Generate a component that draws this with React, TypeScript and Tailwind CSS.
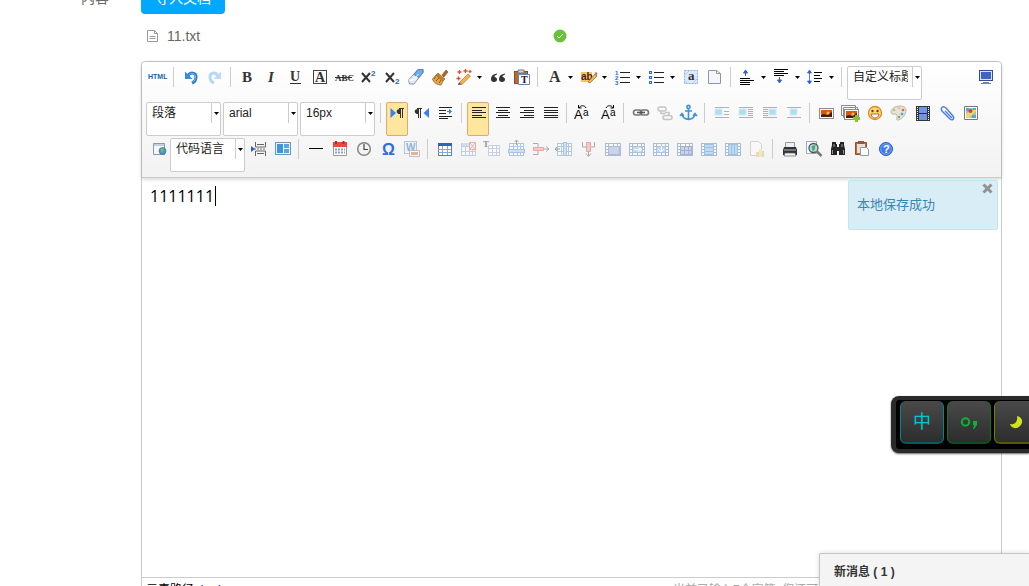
import React, { type ReactNode } from 'react';

const grid = (o: number, accent: ReactNode) => (
  <g opacity={o} shapeRendering="crispEdges">
    <path d="M2.500 4.500h14v12h-14z" fill="#fff" stroke="#7f9fd0" />
    <path d="M3 7.500h14M3 12.500h14M6.500 4v12M13.500 4v12M10.500 4v12" stroke="#7f9fd0" fill="none" />
    {accent}
  </g>
);

const cells = (accent: ReactNode) => (
  <g opacity="0.5" shapeRendering="crispEdges">
    <path d="M2.500 4.500h15v12h-15z" fill="#fff" stroke="#5f86bd" />
    <path d="M2 7.500h16M2 13.500h16M5.500 4v13M14.500 4v13M10.500 4v3M10.500 14v3M2 10.500h3M15 10.500h3" stroke="#5f86bd" fill="none" />
    {accent}
  </g>
);

const lines = (rows: [number, number, number][], color = '#222') => (
  <path
    shapeRendering="crispEdges"
    stroke={color}
    fill="none"
    d={rows.map(([x, y, w]) => `M${x} ${y + 0.5}h${w}`).join('')}
  />
);

const letter = (t: string, x: number, y: number, size: number, cls = '', color = '#333') => (
  <text x={x} y={y} fontSize={size} fill={color} className={cls}>{t}</text>
);

const serif = "font-['Liberation_Serif',serif]";
const sans = "font-['Liberation_Sans',sans-serif]";

const photo = (x: number, y: number) => (
  <g>
    <rect x={x + 0.5} y={y + 0.5} width="14" height="10" fill="#fff" stroke="#8b8b8b" />
    <rect x={x + 2} y={y + 2} width="11" height="7" fill="#d9560d" />
    <path d={`M${x + 2} ${y + 7}l3-1 3 1 5-3v5h-11z`} fill="#4a1d08" />
    <circle cx={x + 9} cy={y + 5} r="1.500" fill="#ffc24a" />
  </g>
);

const floatIcon = (x: number, ls: [number, number, number][]) => (
  <g opacity="0.55">
    {lines(ls, '#777')}
    <rect x={x} y="6" width="7" height="6" fill="#6cc8f2" stroke="#b8dff0" />
  </g>
);

const icons: Record<string, ReactNode> = {
  html: letter('HTML', 0, 12, 7, `${sans} font-bold`, '#1c62a8'),
  undo: (
    <g fill="none">
      <path d="M7 9C9 5 15 5 15 10c0 3-1.500 5-4 6" stroke="#2b79c9" strokeWidth="3" />
      <path d="M7 9C9 5.500 14.500 5 14.500 10c0 2.500-1 4-3 5" stroke="#6fbcf5" strokeWidth="1" />
      <path d="M4 4.500V12h7.500z" fill="#3b8cdd" />
    </g>
  ),
  redo: (
    <g fill="none" opacity="0.4">
      <path d="M13 9C11 5 5 5 5 10c0 3 1.500 5 4 6" stroke="#4ba3ee" strokeWidth="3" />
      <path d="M16 4.500V12H8.500z" fill="#5aa9ee" />
    </g>
  ),
  bold: letter('B', 4, 15, 15, `${serif} font-bold`),
  italic: letter('I', 6, 15, 15, `${serif} font-bold italic`),
  underline: <g>{letter('U', 4, 14, 14, `${serif} font-bold`)}<path d="M4 16.500h11" stroke="#333" /></g>,
  border: (
    <g>
      <rect x="3.500" y="3.500" width="13" height="13" fill="none" stroke="#444" />
      {letter('A', 5, 15, 14, `${serif} font-bold`)}
    </g>
  ),
  strike: <g>{letter('ABC', 1, 14, 9, `${serif} font-bold`)}<path d="M1 10.500h17" stroke="#333" /></g>,
  sup: (
    <g>
      <path d="M4 6l8 9M12 6l-8 9" stroke="#333" strokeWidth="2" />
      {letter('2', 13, 9, 8, `${sans} font-bold`, '#2a63c8')}
    </g>
  ),
  sub: (
    <g>
      <path d="M4 6l8 9M12 6l-8 9" stroke="#333" strokeWidth="2" />
      {letter('2', 13, 17, 8, `${sans} font-bold`, '#2a63c8')}
    </g>
  ),
  eraser: (
    <g strokeLinejoin="round">
      <path d="M2.500 13L12 2.500h5v3L8 17H3.500z" fill="#e3ecf7" stroke="#8294aa" />
      <path d="M12 2.500h5v3l-4 5-5-3z" fill="#6faaf0" stroke="#4e82c0" />
      <path d="M2.500 13h5l5-6" fill="none" stroke="#fff" />
    </g>
  ),
  brush: (
    <g>
      <path d="M12 8l4-5 2 2-4 5z" fill="#a8652c" stroke="#7f481b" strokeWidth=".6" />
      <path d="M8 6l7 6-2 2-7-6z" fill="#c9822c" stroke="#8a5214" strokeWidth=".6" />
      <path d="M6 8l7 6-2 4c-4 0-8-3-8.500-6z" fill="#e3a54c" stroke="#9b611b" strokeWidth=".8" />
      <path d="M4 12l2-2M6 14l3-3M9 16l2-3" stroke="#80490f" strokeWidth=".8" />
    </g>
  ),
  auto: (
    <g>
      <path d="M5 16l9-9 2.500 2L8 17.500z" fill="#f5b443" stroke="#b5702b" strokeWidth=".7" />
      <path d="M4 18l1-2.500 2.500 2z" fill="#444" />
      <path d="M5.500 3v4M3.500 5h4M11.500 2v4M9.500 4h4M4.500 9.500v4M2.500 11.500h4M16 3v3M14.500 4.500h3" stroke="#e0502f" strokeWidth="1.300" />
    </g>
  ),
  quote: (
    <path d="M9 6.500C5 7 3 9 3 12c0 2 1 3 3 3s3-1 3-2.500S8 10 6.500 10C6.500 8.500 7.500 8 9 7.500zM17 6.500c-4 .5-6 2.500-6 5.500 0 2 1 3 3 3s3-1 3-2.500-1-2.500-2.500-2.500c0-1.500 1-2 2.500-2.500z" fill="#333" />
  ),
  pasteText: (
    <g>
      <rect x="2.500" y="4.500" width="13" height="12" fill="#b86b33" stroke="#8c4c20" />
      <path d="M6 3h6v3H6z" fill="#d8d8d8" stroke="#777" />
      <path d="M6.500 7.500h11v10h-11z" fill="#fff" stroke="#6687aa" />
      {letter('T', 9, 16, 10, `${serif} font-bold`, '#111')}
    </g>
  ),
  color: letter('A', 4, 15, 16, `${serif} font-bold`),
  highlight: (
    <g>
      <path d="M2 5h11v10H2z" fill="#ffc266" />
      {letter('ab', 2, 13, 10, `${sans} font-bold`, '#422')}
      <path d="M9 15l7-8 2 2-7 7z" fill="#f3bb52" stroke="#94662b" strokeWidth=".7" />
      <path d="M15.500 6l1.500-1 1.500 1.500-1 2z" fill="#e45f4d" />
    </g>
  ),
  ol: (
    <g>
      {letter('1', 2, 8, 6, `${sans} font-bold`, '#2864dc')}
      {letter('2', 2, 13, 6, `${sans} font-bold`, '#2864dc')}
      {letter('3', 2, 18, 6, `${sans} font-bold`, '#2864dc')}
      {lines([[7, 5, 10], [7, 10, 10], [7, 15, 10]])}
    </g>
  ),
  ul: (
    <g>
      <g fill="#dce8ff" stroke="#3269dd">
        <rect x="2.500" y="4.500" width="2" height="2" /><rect x="2.500" y="9.500" width="2" height="2" /><rect x="2.500" y="14.500" width="2" height="2" />
      </g>
      {lines([[7, 5, 10], [7, 10, 10], [7, 15, 10]])}
    </g>
  ),
  selectAll: (
    <g>
      <rect x="3.500" y="3.500" width="13" height="13" fill="#dce9fc" stroke="#85b1ec" strokeDasharray="2 1" />
      <path d="M4 8l4-4M12 16l4-4M4 14l2 2" stroke="#b5d0f6" />
      {letter('a', 7, 13, 13, `${serif} font-bold`)}
    </g>
  ),
  page: (
    <path d="M3.500 3.500h8l4 3v10h-12zM11.500 3.500v3h4" fill="#f3f6fb" stroke="#8e97a6" />
  ),
  before: <g>{lines([[2, 11, 10], [2, 13, 14], [2, 15, 10], [2, 17, 10]], '#000')}<path d="M7.500 9V4M5.500 6l2-3 2 3z" stroke="#3163c8" fill="#3163c8" /></g>,
  after: <g>{lines([[2, 2, 14], [2, 4, 10], [2, 6, 14], [2, 8, 10]], '#000')}<path d="M7.500 10v5M5.500 13l2 3 2-3z" stroke="#3163c8" fill="#3163c8" /></g>,
  lineHeight: <g>{lines([[8, 5, 8], [8, 8, 6], [8, 11, 8], [8, 14, 6]], '#000')}<path d="M3.500 5v11M1.500 6l2-3 2 3zM1.500 14l2 3 2-3z" stroke="#3163c8" fill="#3163c8" strokeWidth=".8" /></g>,
  screen: (
    <g>
      <rect x="2.500" y="3.500" width="13" height="10" fill="#d9e1f2" stroke="#334d91" />
      <rect x="4" y="5" width="10" height="7" fill="#3b64c5" />
      <path d="M6 15.500h6M4 16.500h10" stroke="#71819f" />
    </g>
  ),
  ltr: <g><path d="M2.500 5l5.500 5-5.500 5z" fill="#3b7fec" /><path d="M13 6v5c-5 1-6-5-1-5z" fill="#333" /><path d="M12.500 6v9M14.500 6v9M11 5.500h5" stroke="#333" fill="none" /></g>,
  rtl: <g><path d="M17 5l-5.500 5 5.500 5z" fill="#3b7fec" /><path d="M7 6v5c-5 1-6-5-1-5z" fill="#333" /><path d="M6.500 6v9M8.500 6v9M5 5.500h5" stroke="#333" fill="none" /></g>,
  indent: <g>{lines([[3, 4, 13], [3, 7, 7], [3, 10, 7], [3, 13, 13], [3, 15, 9]])}<path d="M11 8.500h3M13.500 6.500l2 2-2 2z" fill="#3b7fec" stroke="#3b7fec" /></g>,
  left: lines([[3, 4, 14], [3, 7, 10], [3, 9, 14], [3, 12, 10], [3, 14, 14]]),
  center: lines([[3, 4, 14], [5, 7, 10], [3, 9, 14], [5, 12, 10], [3, 14, 14]]),
  right: lines([[3, 4, 14], [7, 7, 10], [3, 9, 14], [7, 12, 10], [3, 14, 14]]),
  justify: lines([[3, 4, 14], [3, 7, 14], [3, 9, 14], [3, 12, 14], [3, 14, 14]]),
  upper: <g>{letter('A', 0, 16, 13, sans, '#000')}{letter('a', 9, 13, 10, sans, '#000')}<path d="M5 5c1-3 6-3 7 0M4.500 2v3h3" fill="none" stroke="#000" /></g>,
  lower: <g>{letter('A', 3, 16, 13, sans, '#000')}{letter('a', 12, 13, 10, sans, '#000')}<path d="M8 5c1-3 6-3 7 0M15.500 2v3h-3" fill="none" stroke="#000" /></g>,
  link: (
    <g fill="none" stroke="#777" strokeWidth="1.600">
      <rect x="2.500" y="7" width="8" height="5" rx="2.500" /><rect x="9.500" y="7" width="8" height="5" rx="2.500" /><path d="M6 9.500h8" stroke="#555" />
    </g>
  ),
  unlink: (
    <g fill="none" stroke="#aaa" strokeWidth="1.500" opacity=".65">
      <rect x="3" y="4" width="8" height="4" rx="2" /><rect x="8" y="12.500" width="9" height="4" rx="2" /><path d="M6 8v2.500h4M14 12.500V9.500h-4" />
    </g>
  ),
  anchor: (
    <g fill="none" stroke="#3f94d4" strokeWidth="1.600">
      <circle cx="9.500" cy="4" r="1.600" /><path d="M9.500 6v10.500M6 8h7M3 11c0 4 3.500 5 6.500 5.500 3-.5 6.500-1.500 6.500-5.500M1 13l2-2.500L5 13M14 13l2-2.500 2 2.500" />
    </g>
  ),
  imgLeft: floatIcon(3, [[3, 4, 14], [12, 8, 5], [12, 11, 5], [3, 14, 14]]),
  imgInline: floatIcon(3, [[3, 4, 14], [12, 6, 5], [12, 8, 5], [12, 10, 5], [12, 12, 5], [3, 14, 14]]),
  imgRight: floatIcon(9, [[3, 4, 14], [3, 6, 5], [3, 8, 5], [3, 10, 5], [3, 12, 5], [3, 14, 14]]),
  imgCenter: floatIcon(6, [[3, 4, 14], [3, 14, 14]]),
  image: photo(2, 5),
  images: (
    <g>
      <path d="M.5 2.500h14v10h-14zM2.500 4.500h14v10h-14z" fill="#fff" stroke="#8b8b8b" />
      {photo(3, 6)}
      <path d="M15.500 12v7M12 15.500h7" stroke="#85c81a" strokeWidth="3" />
    </g>
  ),
  smile: (
    <g>
      <circle cx="10" cy="10" r="6.500" fill="#ffd976" stroke="#e08a20" strokeWidth="1.300" />
      <circle cx="7.500" cy="8" r="1.200" fill="#703c0a" /><circle cx="12.500" cy="8" r="1.200" fill="#703c0a" />
      <path d="M6 11h8c-.5 3-2 4-4 4s-3.500-1-4-4z" fill="#fff" stroke="#994f0d" strokeWidth=".8" />
    </g>
  ),
  palette: (
    <g>
      <path d="M17 7c0-4-6-5-11-3-4 2-5 5-3 7 2 1 4-1 5 1s-2 5 1 5c5-1 8-6 8-10z" fill="#e5e2d8" stroke="#b9b7ae" />
      <circle cx="5" cy="7" r="1.300" fill="#a9c98f" /><circle cx="10" cy="5" r="1.300" fill="#e7c67a" /><circle cx="14" cy="7" r="1.300" fill="#d66b4a" /><circle cx="13" cy="11" r="1.300" fill="#5b9ad1" /><circle cx="10" cy="14" r="1.200" fill="#75b552" />
    </g>
  ),
  film: (
    <g>
      <path d="M3 3h14v15H3z" fill="#333" />
      <path d="M6 4h8v6H6zM6 11h8v6H6z" fill="#7196e7" />
      <path d="M4.500 4v14M15.500 4v14" stroke="#fff" strokeDasharray="1 1" />
    </g>
  ),
  clip: <path d="M5 8l7 7c2 2 5 0 3-3L8 4C5 1 2 4 4 7l8 8M7 7l7 7" transform="translate(1 1)" fill="none" stroke="#4a7fe0" strokeWidth="1.400" />,
  map: (
    <g>
      <path d="M3.500 3.500h13v13h-13z" fill="#fff" stroke="#777" />
      <path d="M5 5h10v10H5z" fill="#8fcf9b" /><path d="M5 11l10-6v3l-7 7H5z" fill="#f4d66d" /><path d="M11 12h4v3h-4zM5 5h3v3H5zM12 5h3v2h-3z" fill="#5ba4d9" /><circle cx="9.500" cy="8" r="2" fill="#df3e38" />
    </g>
  ),
  webapp: (
    <g>
      <path d="M5.500 4.500h11v11h-11z" fill="#f6f8fa" stroke="#8c99a7" /><path d="M6 6h10" stroke="#c5d0dc" strokeWidth="2" />
      <circle cx="14.500" cy="12" r="3.500" fill="#4c94cf" stroke="#33699a" strokeWidth=".6" /><path d="M12.500 10l3-1 0 3-2 2z" fill="#6ec259" />
    </g>
  ),
  pageBreak: (
    <g fill="none">
      <path d="M6.500 3v5h10V3M6.500 17v-5h10v5M8 5.500h7M8 14.500h7" stroke="#666" /><path d="M5 10h12" stroke="#777" strokeDasharray="2 1" /><path d="M2 7l4 3-4 3z" fill="#2a5bd0" />
    </g>
  ),
  template: (
    <g>
      <rect x="2.500" y="3.500" width="15" height="12" fill="#e9f5ff" stroke="#7194b5" />
      <path d="M4 5h6v9H4z" fill="#3c95de" /><path d="M11 5h5v4h-5zM11 10h5v4h-5z" fill="#55a8e8" />
    </g>
  ),
  hr: lines([[3, 9, 14]], '#000'),
  date: (
    <g>
      <path d="M3.500 5.500h13v11h-13z" fill="#fff" stroke="#999" /><path d="M3 3h14v5H3z" fill="#e64a3d" /><path d="M6 2v3M13.500 2v3" stroke="#b62920" strokeWidth="2" />
      <path d="M5 10.500h10M5 13.500h10" stroke="#8aa1b9" strokeWidth="2" strokeDasharray="2 1" />
    </g>
  ),
  clock: <g><circle cx="10" cy="10" r="6.300" fill="#f3f3f3" stroke="#858585" strokeWidth="1.500" /><path d="M10 5v5.500h4" fill="none" stroke="#444" strokeWidth="1.200" /></g>,
  omega: letter('Ω', 4, 16, 16, `${sans} font-bold`, '#2f6de0'),
  word: (
    <g opacity=".5">
      <rect x="2.500" y="2.500" width="12" height="12" fill="#eef5fc" stroke="#6c9ac9" />
      {letter('W', 4, 12, 10, `${sans} font-bold`, '#286ab0')}
      <path d="M7.500 11.500h10v6h-10z" fill="#fff" stroke="#888" /><path d="M9 13h7v3H9z" fill="#cf7440" />
    </g>
  ),
  table: (
    <g shapeRendering="crispEdges">
      <path d="M3.500 4.500h13v12h-13z" fill="#fff" stroke="#5d7fb8" /><path d="M3 10.500h13M3 13.500h13M7.500 7v9M12.500 7v9" fill="none" stroke="#8aa6d6" /><path d="M3 4h14v3H3z" fill="#2e63bb" />
    </g>
  ),
  delTable: <g opacity=".45">{grid(1, <path d="M3 4h14v3H3z" fill="#a9bddd" />)}<path d="M10.500 3.500h6v7h-6z" fill="#fff" stroke="#e34f48" /><path d="M11 4l5 6M16 4l-5 6" stroke="#e34f48" /></g>,
  paraTable: <g opacity=".5">{letter('T', 0, 8, 9, `${serif} font-bold`)}<path d="M5.500 6.500h11v10h-11zM6 9.500h10M6 13.500h10M9.500 7v9M13.500 7v9" fill="#fff" stroke="#9aabd0" /></g>,
  insRow: <g opacity=".55">{grid(1, <path d="M1.500 10.500h16v3h-16z" fill="#a8d4f5" stroke="#5ea2d9" />)}<path d="M9.500 6V1M7.500 3l2-2 2 2" fill="none" stroke="#666" /></g>,
  delRow: <g opacity=".5"><path d="M2 4.500h5v4M2 15.500h5v-4M15 7.500l3 2.500-3 2.500M12 10h6" fill="none" stroke="#666" /><path d="M2.500 8.500h10v3h-10z" fill="#f3a09b" stroke="#d55d57" /></g>,
  insCol: <g opacity=".55">{grid(1, <path d="M8.500 3.500h3v13h-3z" fill="#a8d4f5" stroke="#5ea2d9" />)}<path d="M5 10H0M2 8l-2 2 2 2" fill="none" stroke="#555" /></g>,
  delCol: <g opacity=".5"><path d="M3.500 3v5h4M15.500 3v5h-4M7 14.500l2.500 3 2.500-3M9.500 12v5" fill="none" stroke="#666" /><path d="M7.500 3.500h4v9h-4z" fill="#f3a09b" stroke="#d55d57" /></g>,
  merge: cells(<path d="M5.500 7.500h11v8h-11z" fill="#a3b1e2" stroke="#6b86b3" />),
  mergeRight: cells(<g><path d="M5 7.500h10v6H5z" fill="#8ac2f3" stroke="#5f95c7" /><path d="M7 10.500h6M11 8l3 2.500-3 2.500" fill="none" stroke="#fff" /></g>),
  mergeDown: cells(<g><path d="M5.500 7.500h9v6h-9z" fill="#8ac2f3" stroke="#5f95c7" /><path d="M10 7v6M7.500 10.500L10 13l2.500-2.500" fill="none" stroke="#fff" /></g>),
  splitCells: cells(<path d="M5.500 7.500h11v8h-11zM5 11.500h12M9.500 7v8M13.500 7v8" fill="#a3b1e2" stroke="#526fa7" />),
  splitRows: cells(<path d="M5.500 5.500h9v10h-9zM5 8.500h10M5 12.500h10" fill="#8ac2f3" stroke="#4d8ccc" />),
  splitCols: cells(<path d="M5.500 5.500h9v10h-9zM8.500 5v10M11.500 5v10" fill="#8ac2f3" stroke="#4d8ccc" />),
  chart: <g opacity=".3"><path d="M3.500 2.500h8l3 3v11h-11z" fill="#fff" stroke="#888" /><path d="M9 13h3v5H9z" fill="#ed923c" /><path d="M12 10h3v8h-3z" fill="#efcf36" /><path d="M15 12h2v6h-2z" fill="#7cb843" /></g>,
  print: <g><path d="M5.500 3.500h9v5h-9z" fill="#e9f0f8" stroke="#999" /><path d="M4 8h12l1 3v5H3v-5z" fill="#333" /><path d="M4 11h12" stroke="#bbb" /><path d="M5 14h10l1 3H4z" fill="#eef5fb" stroke="#666" strokeWidth=".7" /></g>,
  preview: <g><path d="M2.500 2.500h10v12h-10z" fill="#f6f9fb" stroke="#9eabb8" /><circle cx="9.500" cy="9" r="4.500" fill="#a9ddf5" stroke="#555" strokeWidth="1.300" /><path d="M7.500 7l4-1-1 5-2 1z" fill="#50aa55" /><path d="M12.500 12l5 5" stroke="#777" strokeWidth="2.500" /></g>,
  search: (
    <g fill="#252525">
      <path d="M4 3h4v2h1v3h2V5h1V3h4v3l1 4v6h-6v-4H9v4H3v-6l1-4z" /><path d="M4.500 11v4M15.500 11v4M6 5v3M14 5v3" stroke="#999" />
    </g>
  ),
  draft: <g><path d="M3.500 3.500h11v12h-11z" fill="#bd6b34" stroke="#92502c" /><path d="M5 5h8v9H5z" fill="#e8dfd5" /><path d="M6 2h6v3H6z" fill="#8d5940" /><path d="M8.500 8.500h6l2 2v6h-8z" fill="#fff" stroke="#8e9bad" /></g>,
  help: <g><circle cx="10" cy="10" r="6.500" fill="#3f7af0" stroke="#2358cb" /><circle cx="10" cy="10" r="5.300" fill="none" stroke="#8db0fa" strokeWidth=".7" />{letter('?', 7, 14, 11, `${sans} font-bold`, '#fff')}</g>,
};

function Icon({ name }: { name: string }) {
  return <svg aria-hidden="true" viewBox="-1 0 20 20" className="size-5 shrink-0 overflow-visible">{icons[name]}</svg>;
}

function Arrow() {
  return <svg aria-hidden="true" viewBox="0 0 5 3" className="h-[3px] w-[5px] shrink-0"><path d="M0 0h5L2.500 3z" fill="#000" /></svg>;
}

function Tool({ name, menu, active }: { name: string; menu?: boolean; active?: boolean }) {
  return (
    <button
      type="button"
      aria-label={name}
      aria-pressed={active}
      className={`m-px flex h-[34px] shrink-0 items-start rounded-xs border ${active ? 'border-[#dcac6c] bg-[#ffe69f]' : 'border-transparent'}`}
    >
      <Icon name={name} />
      {menu && <span className="flex h-5 w-2.5 items-center justify-end pr-px"><Arrow /></span>}
    </button>
  );
}

function Separator() {
  return <span className="mx-1 mt-0.5 h-5 w-px shrink-0 bg-[#ccc]" />;
}

function Combo({ label, value }: { label: string; value: string }) {
  return (
    <div className="m-px flex h-[34px] w-[75px] shrink-0 items-start rounded-xs border border-[#ccc] bg-white">
      <select aria-label={label} className="h-5 w-[65px] appearance-none overflow-hidden border-r border-[#ccc] pr-1 pl-[5px] text-xs leading-5 text-[#222] outline-none">
        <option>{value}</option>
      </select>
      <span className="flex h-5 flex-1 items-center justify-end pr-px"><Arrow /></span>
    </div>
  );
}

type Item = string | { combo: string; label: string };

const rows: Item[][] = [
  ['html', '|', 'undo', 'redo', '|', 'bold', 'italic', 'underline', 'border', 'strike', 'sup', 'sub', 'eraser', 'brush', 'auto+', 'quote', 'pasteText', '|', 'color+', 'highlight+', 'ol+', 'ul+', 'selectAll', 'page', '|', 'before+', 'after+', 'lineHeight+', '|', { combo: '自定义标题', label: '标题' }, '>', 'screen'],
  [{ combo: '段落', label: '段落格式' }, { combo: 'arial', label: '字体' }, { combo: '16px', label: '字号' }, '|', 'ltr*', 'rtl', 'indent', '|', 'left*', 'center', 'right', 'justify', '|', 'upper', 'lower', '|', 'link', 'unlink', 'anchor', '|', 'imgLeft', 'imgInline', 'imgRight', 'imgCenter', '|', 'image', 'images', 'smile', 'palette', 'film', 'clip', 'map'],
  ['webapp', { combo: '代码语言', label: '代码语言' }, 'pageBreak', 'template', '|', 'hr', 'date', 'clock', 'omega', 'word', '|', 'table', 'delTable', 'paraTable', 'insRow', 'delRow', 'insCol', 'delCol', 'merge', 'mergeRight', 'mergeDown', 'splitCells', 'splitRows', 'splitCols', 'chart', '|', 'print', 'preview', 'search', 'draft', 'help'],
];

function renderItem(item: Item, i: number) {
  if (typeof item !== 'string') return <Combo key={i} label={item.label} value={item.combo} />;
  if (item === '|') return <Separator key={i} />;
  if (item === '>') return <span key={i} className="flex-1" />;
  return <Tool key={i} name={item.replace(/[+*]$/, '')} menu={item.endsWith('+')} active={item.endsWith('*')} />;
}

function Toolbar() {
  return (
    <div role="toolbar" aria-label="编辑工具" className="rounded-t border-b border-[#ccc] bg-linear-to-b from-white to-[#f2f2f2] px-[3px] pt-[3px] pb-1 shadow-[0_1px_4px_rgba(0,0,0,0.2)]">
      {rows.map((row, i) => (
        <div key={i} className="flex">{row.map(renderItem)}</div>
      ))}
    </div>
  );
}

function Notice() {
  return (
    <div role="status" className="absolute top-0.5 right-[3px] h-[50px] w-[150px] rounded-xs border border-[#bce8f1] bg-[#d9edf7] px-2 pt-3.5 text-[13px] leading-5 text-[#3a87ad]">
      本地保存成功
      <button type="button" aria-label="关闭" className="absolute top-0.5 right-1">
        <svg viewBox="0 0 11 11" className="size-[11px]"><path d="M1.500 1.500l8 8M9.500 1.500l-8 8" stroke="#929292" strokeWidth="3" /></svg>
      </button>
    </div>
  );
}

function InputMethodBar() {
  const key = 'flex h-[43px] w-11 shrink-0 items-center justify-center rounded-md border-x border-b-2 bg-linear-to-b from-[#4a4a4a] to-[#2d2d2d]';
  return (
    <div className="absolute top-[396px] right-0 flex h-[57px] w-[138px] overflow-hidden rounded-l-lg border-y-4 border-l-[5px] border-[#2a2a2a] bg-black pl-1 shadow-[0_1px_2px_rgba(0,0,0,0.6)]">
      <div className="flex gap-[3px] pt-px">
        <button type="button" className={`${key} border-x-[#08838d] border-b-[#0b5960] text-lg text-[#08c5d0]`}>中</button>
        <button type="button" aria-label="标点" className={`${key} border-x-[#0b7522] border-b-[#0c4f1c]`}>
          <svg viewBox="0 0 20 16" className="h-4 w-5"><circle cx="6.500" cy="8" r="3.700" fill="none" stroke="#09b433" strokeWidth="2" /><path d="M14 7h4v4l-3 4h-1l1-4h-1z" fill="#09b433" /></svg>
        </button>
        <button type="button" aria-label="半角" className={`${key} border-x-[#7d7b09] border-b-[#57560c]`}>
          <svg viewBox="0 0 14 14" className="size-3.5"><path d="M8 1c5 1 7 6 3 10s-9 2-10-2c5 1 8-3 7-8z" fill="#cfe51b" /></svg>
        </button>
      </div>
    </div>
  );
}

function MessagePopup() {
  return (
    <aside className="absolute right-0 bottom-0 h-[33px] w-[210px] overflow-hidden rounded-tl-xs border-t border-l border-[#c6c6c6] bg-[#f4f4f4] pl-3.5 shadow-[0_0_5px_rgba(0,0,0,0.15)]">
      <h2 className="pt-2 text-xs leading-5 font-bold text-[#333]">新消息 ( 1 )</h2>
      <p className="text-xs leading-5 text-[#999]">1111 Questions</p>
    </aside>
  );
}

export default function App() {
  return (
    <main className="relative flex h-screen overflow-hidden bg-white font-['Liberation_Sans','Noto_Sans_CJK_SC',sans-serif] text-[#666]">
      <div className="w-[141px] shrink-0 pr-8 text-right text-sm">
        <span className="-mt-3 block leading-5">内容</span>
      </div>
      <div className="min-w-0 flex-1 pr-[27px]">
        <button type="button" className="-mt-[18px] block h-8 w-[84px] rounded bg-[#00a9ff] text-sm text-white">导入文档</button>
        <div className="flex h-[47px] w-[430px] items-center justify-between pr-1 pb-1 pl-1.5">
          <a href="#file" className="flex items-center gap-2 text-sm">
            <svg aria-hidden="true" viewBox="0 0 12 14" className="h-3.5 w-3"><path d="M.5 1.500h7l3 3v8H.5zM7.500 1.500v3h3M2.500 7.500h6M2.500 9.500h6" fill="none" stroke="#999" /></svg>
            11.txt
          </a>
          <svg aria-label="上传成功" viewBox="0 0 14 14" className="size-3.5"><circle cx="7" cy="7" r="6.500" fill="#67c23a" /><path d="M4 7l2 2 4-4" fill="none" stroke="#fff" /></svg>
        </div>
        <section aria-label="内容编辑器" className="rounded border border-[#ccc] bg-white">
          <Toolbar />
          <div className="relative h-[399px]">
            <div role="textbox" aria-label="内容" aria-multiline="true" contentEditable suppressContentEditableWarning className="flex h-full items-start p-2 font-['Open_Sans','Noto_Sans_CJK_SC',sans-serif] text-base leading-5 text-black outline-none">
              1111111<span className="ml-px h-5 w-px bg-black" />
            </div>
            <Notice />
          </div>
          <footer className="flex h-6 items-center justify-between border-t border-[#ccc] pr-[72px] pl-1 text-xs leading-6">
            <span className="text-black">元素路径: <a href="#body" className="text-[#00f]">body</a></span>
            <span className="text-[#aaa]">当前已输入7个字符, 您还可以输入9993个字符。</span>
          </footer>
        </section>
      </div>
      <InputMethodBar />
      <MessagePopup />
    </main>
  );
}
